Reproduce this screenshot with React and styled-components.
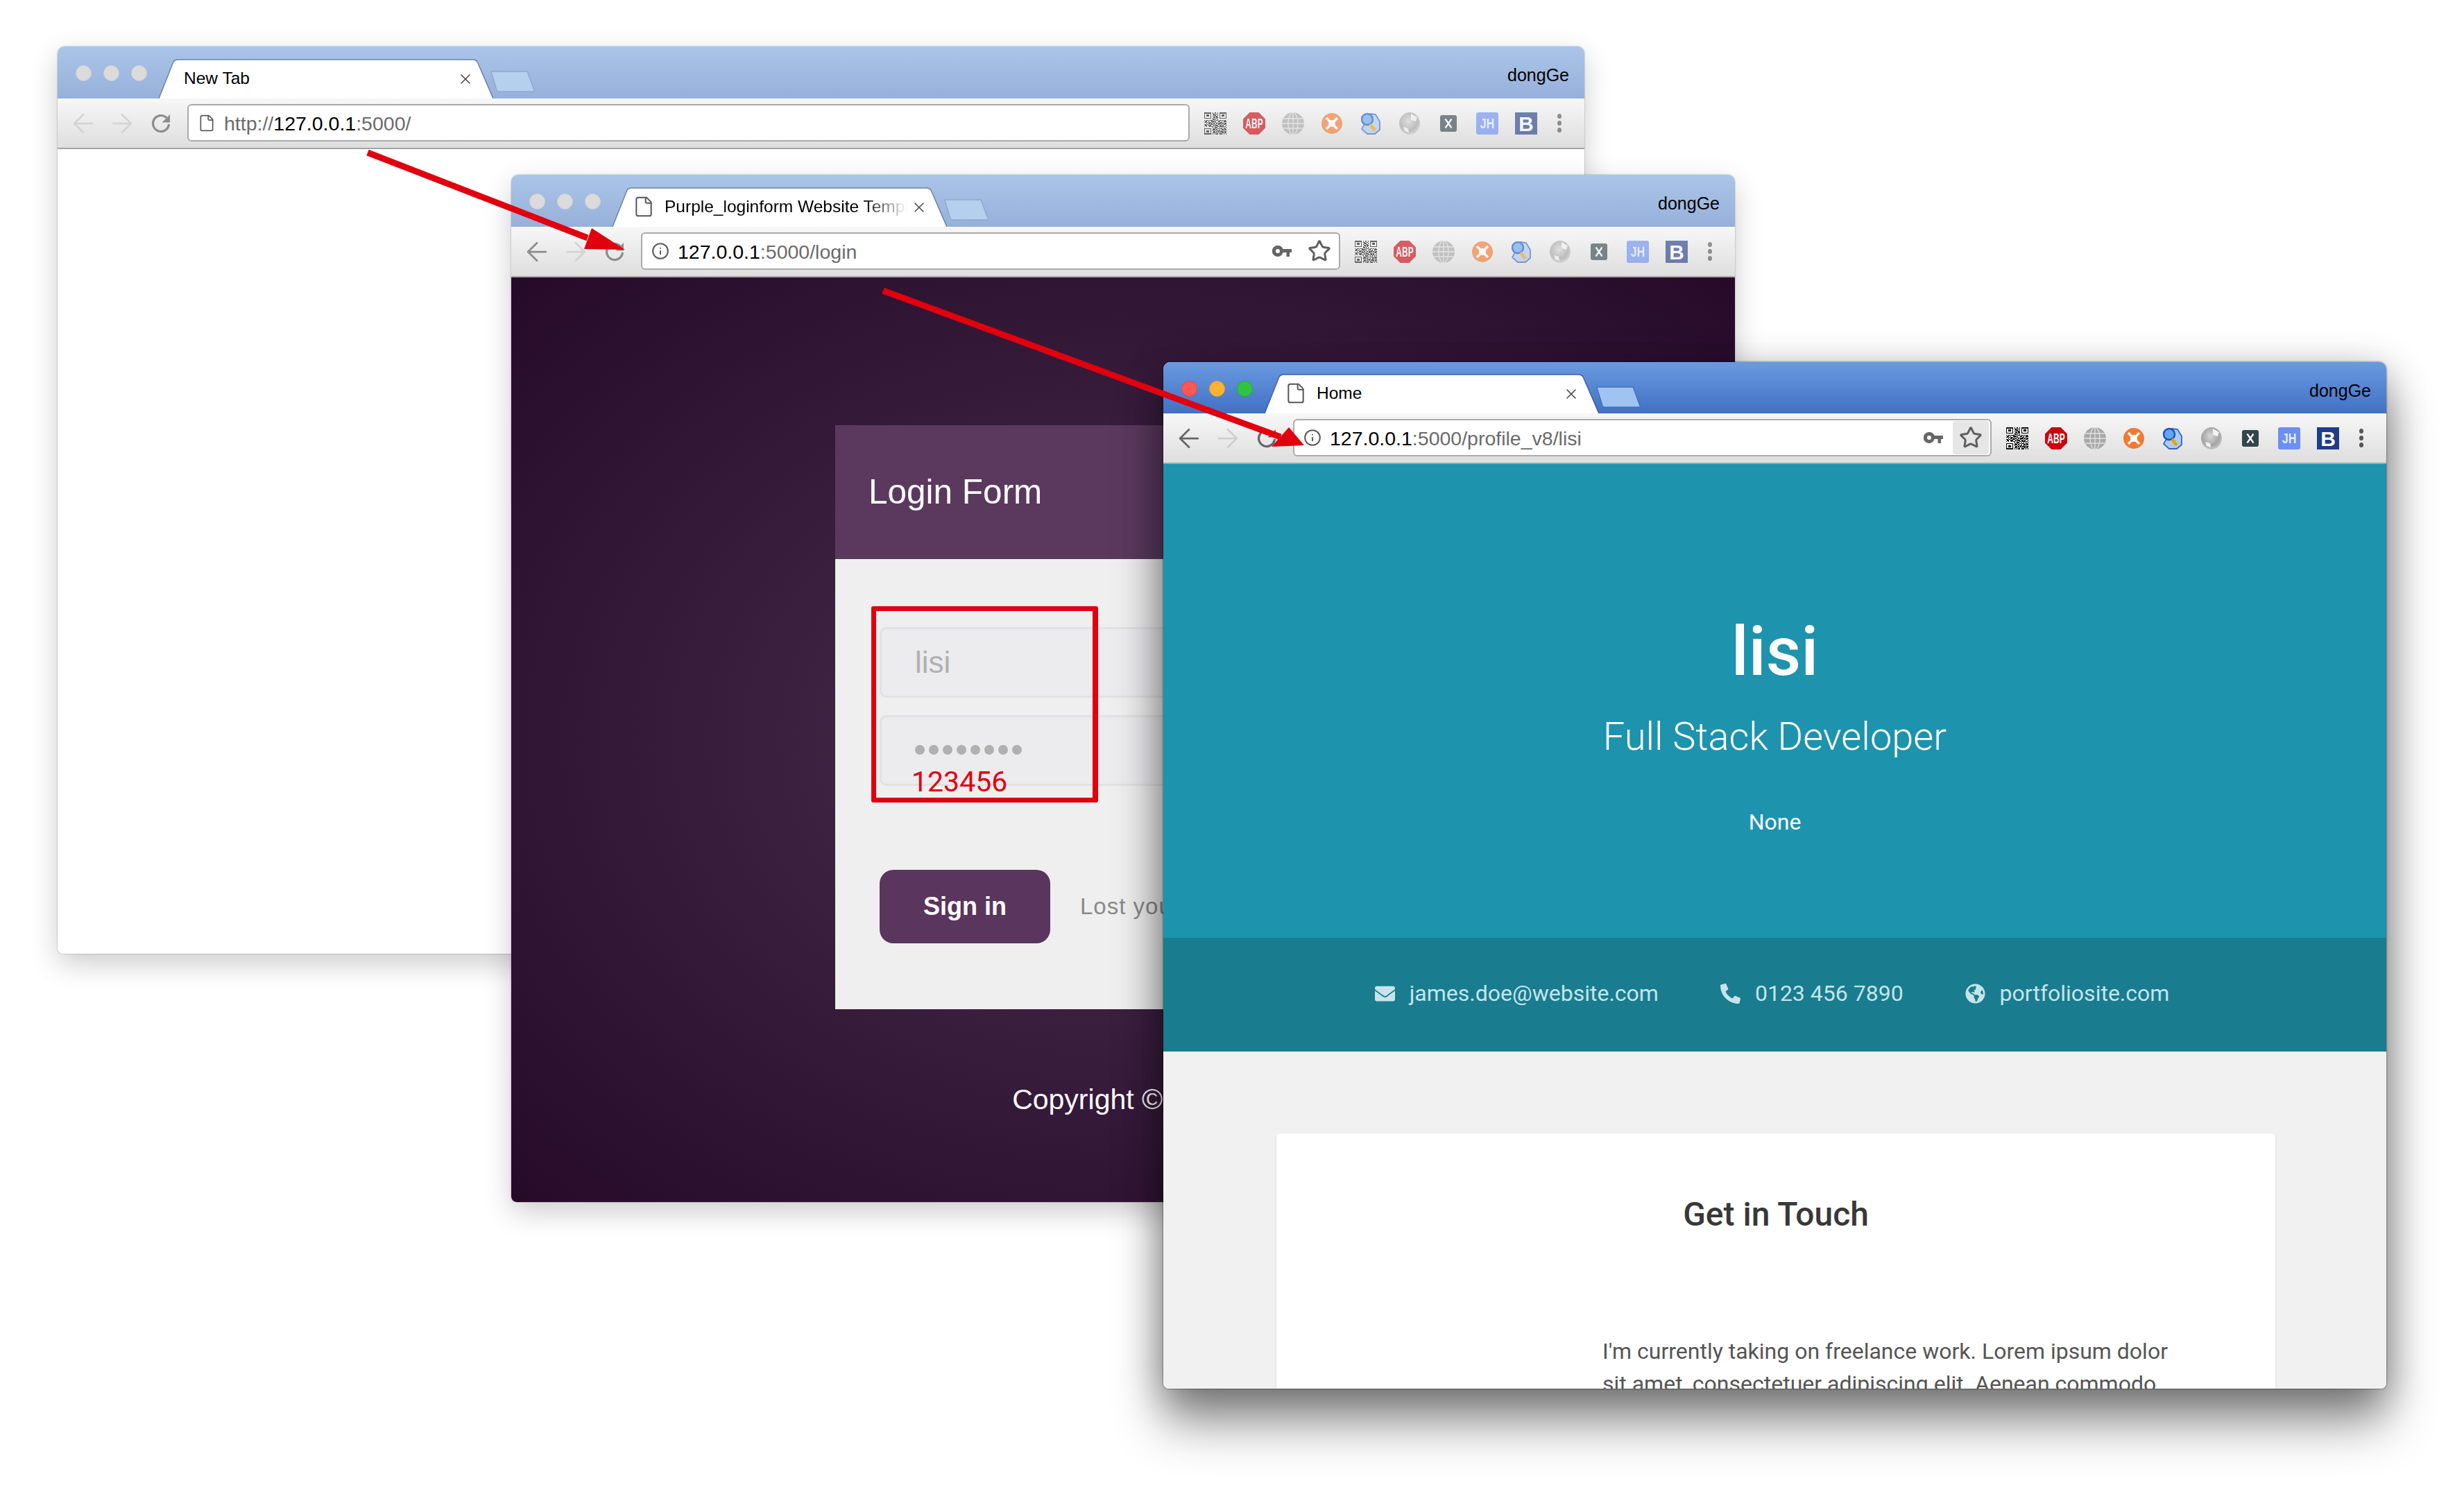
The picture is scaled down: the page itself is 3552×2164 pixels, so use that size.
import React from "react";
import styled, { createGlobalStyle } from "styled-components";
import { ArrowLeft, ArrowRight, File, Info, Star, X } from "lucide-react";
import { FaEnvelope, FaGlobeAmericas, FaPhoneAlt } from "react-icons/fa";

const GlobalStyle = createGlobalStyle`
  html, body {
    margin: 0;
    padding: 0;
    background: #fff;
    font-family: "Liberation Sans", Arial, sans-serif;
  }
  * { box-sizing: border-box; }
`;

const Stage = styled.div`
  position: relative;
  width: 3552px;
  height: 2164px;
  overflow: hidden;
  background: #fff;
`;

/* windows sit on a free desktop, so their place is given by props */
const Window = styled.section`
  position: absolute;
  left: ${(p) => p.$x}px;
  top: ${(p) => p.$y}px;
  width: ${(p) => p.$w}px;
  height: ${(p) => p.$h}px;
  display: flex;
  flex-direction: column;
  overflow: hidden;
  border-radius: 10px 10px 8px 8px;
  background: #fff;
  box-shadow: ${(p) =>
    p.$active
      ? "0 0 3px rgba(0,0,0,.6), 0 50px 70px rgba(0,0,0,.42), 0 10px 55px rgba(0,0,0,.3)"
      : "0 0 2px rgba(0,0,0,.4), 0 14px 40px rgba(0,0,0,.2)"};
`;

const TabBar = styled.div`
  flex: none;
  height: ${(p) => (p.$active ? 74 : 75)}px;
  display: flex;
  align-items: flex-start;
  padding-left: 26px;
  background: ${(p) =>
    p.$active
      ? "linear-gradient(#6a9ae0, #4270c5)"
      : "linear-gradient(#aac5e8, #97b0da)"};
`;

const Lights = styled.div`
  display: flex;
  gap: 17px;
  margin-top: 27px;
  margin-right: 17px;
`;

const Light = styled.span`
  width: 23px;
  height: 23px;
  border-radius: 50%;
  background: ${(p) => p.$color};
  border: 1px solid ${(p) => p.$edge};
`;

const Tab = styled.div`
  position: relative;
  width: 482px;
  height: 57px;
  margin-top: ${(p) => (p.$active ? 17 : 18)}px;
  display: flex;
  align-items: center;
  padding: 0 0 1px 36px;
  font-size: 24.5px;
  color: #000;
`;

const TabShape = styled.svg`
  position: absolute;
  inset: 0;
`;

const TabIcon = styled.span`
  position: relative;
  display: flex;
  width: 46px;
  margin-left: -7px;
  color: #555;
`;

const TabTitle = styled.span`
  position: relative;
  white-space: nowrap;
  overflow: hidden;
  width: ${(p) => p.$w}px;
  ${(p) =>
    p.$fade &&
    "mask-image: linear-gradient(to right, #000 82%, transparent 100%);"}
`;

const TabClose = styled.span`
  position: absolute;
  left: 430px;
  top: 17px;
  display: flex;
  color: #444;
`;

const NewTab = styled.svg`
  flex: none;
  margin-top: 35px;
  margin-left: -5px;
`;

const UserName = styled.span`
  margin-left: auto;
  margin-right: 22px;
  margin-top: 26px;
  font-size: 25px;
  line-height: 30px;
  color: #000;
`;

const Toolbar = styled.div`
  flex: none;
  height: 73px;
  display: flex;
  align-items: center;
  padding: 0 16px 0 9px;
  background: linear-gradient(#f7f7f7, #dedede);
  border-bottom: 2px solid #a4a4a4;
`;

const NavIcon = styled.span`
  flex: none;
  width: 56px;
  display: flex;
  justify-content: center;
  color: ${(p) => p.$color};
`;

const Omnibox = styled.div`
  flex: 1;
  height: 54px;
  margin: -1px 9px 0 10px;
  padding: 0 2px 0 13px;
  display: flex;
  align-items: center;
  background: #fff;
  border: 2px solid #ababab;
  border-radius: 6px;
  color: #666;
`;

const OmniIcon = styled.span`
  flex: none;
  width: 26px;
  margin-right: 12px;
  display: flex;
  justify-content: center;
  color: #5c5c5c;
`;

const Url = styled.span`
  flex: 1;
  padding-top: 2px;
  font-size: 28.5px;
  color: #6b6b6b;
  white-space: nowrap;

  b {
    font-weight: 400;
    color: #000;
  }
`;

const KeyIcon = styled.span`
  flex: none;
  display: flex;
  margin-right: 14px;
`;

const StarBox = styled.span`
  flex: none;
  width: 52px;
  height: 48px;
  display: flex;
  align-items: center;
  justify-content: center;
  border-radius: 4px;
  color: #5e5e5e;
  background: ${(p) => (p.$pressed ? "#e6e6e6" : "transparent")};
`;

const Extensions = styled.div`
  display: flex;
  align-items: center;
  opacity: ${(p) => (p.$active ? 1 : 0.62)};
`;

const ExtCell = styled.span`
  flex: none;
  width: 56px;
  height: 36px;
  display: flex;
  align-items: center;
  justify-content: center;
`;

const MoreDots = styled.span`
  flex: none;
  width: 40px;
  display: flex;
  flex-direction: column;
  align-items: center;
  gap: 3px;

  i {
    width: 6px;
    height: 7px;
    border-radius: 50%;
    background: #555;
  }
`;

const Content = styled.div`
  flex: 1;
  min-height: 0;
  background: #fff;
`;

/* login page */
const LoginPage = styled(Content)`
  display: flex;
  flex-direction: column;
  align-items: center;
  padding-top: 213px;
  background: radial-gradient(ellipse farthest-corner at 50% 50%, #4a2e50 0%, #260a28 100%);
`;

const LoginPanel = styled.div`
  position: relative;
  width: 830px;
  height: 842px;
  background: #efefef;
`;

const LoginHead = styled.h2`
  margin: 0;
  height: 193px;
  display: flex;
  align-items: center;
  padding: 0 0 2px 48px;
  font-size: 49.5px;
  font-weight: 400;
  color: #fff;
  background: #5b395f;
`;

const LoginBody = styled.div`
  display: flex;
  flex-direction: column;
  gap: 25px;
  padding: 98px 64px 0;
`;

const Input = styled.div`
  height: 102px;
  display: flex;
  align-items: center;
  padding-left: 48px;
  font-size: 44px;
  color: #b0b0b0;
  background: #ecebed;
  border: 3px solid #e2e2e2;
  border-radius: 10px;
`;

const PassDots = styled.span`
  display: flex;
  gap: 6px;
  margin-top: -2px;

  i {
    width: 14px;
    height: 14px;
    border-radius: 50%;
    background: #b0b0b0;
  }
`;

const SignRow = styled.div`
  display: flex;
  align-items: center;
  gap: 43px;
  margin-top: 96px;
`;

const SignIn = styled.span`
  width: 246px;
  height: 106px;
  display: flex;
  align-items: center;
  justify-content: center;
  font-size: 36px;
  font-weight: 700;
  color: #fff;
  background: #5a355e;
  border-radius: 20px;
`;

const LostLink = styled.span`
  font-size: 33px;
  letter-spacing: 1px;
  color: #8a8a8a;
`;

const Copyright = styled.p`
  margin: 105px 0 0;
  font-size: 41px;
  line-height: 50px;
  color: #fff;
`;

/* hand drawn note lying over the form */
const RedBox = styled.div`
  position: absolute;
  left: 52px;
  top: 261px;
  width: 327px;
  height: 283px;
  border: solid #e0000e;
  border-width: 7px 8px 7px 7px;
  border-radius: 3px;
`;

/* profile page */
const Hero = styled.header`
  flex: none;
  height: 683px;
  display: flex;
  flex-direction: column;
  align-items: center;
  padding-top: 216px;
  font-family: Roboto, sans-serif;
  color: #fff;
  background: #1d93ae;
`;

const HeroName = styled.h1`
  margin: 0;
  font-size: 98px;
  line-height: 110px;
  font-weight: 500;
`;

const HeroRole = styled.h2`
  margin: 34px 0 0;
  font-size: 56px;
  line-height: 66px;
  font-weight: 300;
`;

const HeroNote = styled.p`
  margin: 68px 0 0;
  font-size: 32px;
  line-height: 44px;
`;

const ContactBand = styled.div`
  flex: none;
  height: 164px;
  display: flex;
  align-items: center;
  justify-content: center;
  gap: 87px;
  padding: 0 10px 4px 0;
  font-family: Roboto, sans-serif;
  font-size: 32px;
  color: #c6e4ea;
  background: #197c8f;
`;

const Contact = styled.span`
  display: flex;
  align-items: center;
  gap: 19px;

  svg {
    width: 33px;
    height: 29px;
  }
`;

const Main = styled.main`
  flex: 1;
  min-height: 0;
  overflow: hidden;
  padding: 118px 160px 0 163px;
  background: #f1f1f1;
`;

const Card = styled.article`
  height: 900px;
  padding-top: 88px;
  background: #fff;
  border-radius: 4px;
  box-shadow: 0 1px 3px rgba(0, 0, 0, 0.12);
  font-family: Roboto, sans-serif;
`;

const CardTitle = styled.h3`
  margin: 0;
  text-align: center;
  font-size: 48px;
  line-height: 58px;
  font-weight: 500;
  color: #383838;
`;

const CardText = styled.p`
  width: 850px;
  margin: 145px 0 0 470px;
  font-size: 32px;
  line-height: 47px;
  color: #555;
`;

const ArrowLayer = styled.svg`
  position: absolute;
  inset: 0;
  pointer-events: none;
`;

/* toolbar drawings */
const ReloadIcon = () => (
  <svg width="32" height="32" viewBox="0 0 32 32" fill="none">
    <path
      d="M27.500 17a11.500 11.500 0 1 1-3.500-9.300"
      stroke="currentColor"
      strokeWidth="3.200"
    />
    <path d="M29 3v11.500H17.500z" fill="currentColor" />
  </svg>
);

const KeyGlyph = () => (
  <svg width="28" height="16" viewBox="0 0 28 16" fill="#666">
    <path
      fillRule="evenodd"
      d="M8 0a8 8 0 0 1 7.500 5H28v5h-3v6h-4.500v-6h-5A8 8 0 1 1 8 0zm0 5a3 3 0 1 0 0 6 3 3 0 0 0 0-6z"
    />
  </svg>
);

const QR_ROWS = [
  "1111111010110101111111",
  "1000001011001001000001",
  "1011101001110101011101",
  "1011101010011001011101",
  "1000001001101101000001",
  "1111111010101001111111",
  "0000000011010100000000",
  "1011011100101101101010",
  "0110100111010011010111",
  "1101011010110100110100",
  "0010110101001011101011",
  "1101001110110010010110",
  "0110111001011101101001",
  "1010010110100110111010",
  "0000000010111001010101",
  "1111111001010110110110",
  "1000001011101001011011",
  "1011101010010111010100",
  "1011101001101010111011",
  "1000001011010101001010",
  "1111111010101101110101",
];

const QrIcon = () => (
  <svg
    width="32"
    height="32"
    viewBox="0 0 22 21"
    preserveAspectRatio="none"
    shapeRendering="crispEdges"
  >
    {QR_ROWS.flatMap((row, y) =>
      [...row].map((c, x) =>
        c === "1" ? (
          <rect key={`${x}-${y}`} x={x} y={y} width="1" height="1" fill="#111" />
        ) : null
      )
    )}
  </svg>
);

const AbpIcon = () => (
  <svg width="32" height="32" viewBox="0 0 32 32">
    <path d="M9.500 0h13L32 9.500v13L22.500 32h-13L0 22.500v-13z" fill="#c9060f" />
    <text
      x="16"
      y="13.500"
      transform="scale(1 1.700)"
      textAnchor="middle"
      fontFamily="Liberation Sans, sans-serif"
      fontWeight="700"
      fontSize="12"
      fill="#fff"
    >
      ABP
    </text>
  </svg>
);

const GlobeIcon = () => (
  <svg width="32" height="32" viewBox="0 0 32 32" fill="none" stroke="#e0e0e0" strokeWidth="1.300">
    <circle cx="16" cy="16" r="16" fill="#a9a9a9" stroke="none" />
    <ellipse cx="16" cy="16" rx="7" ry="16" />
    <path d="M16 0v32M2 9h28M0 16h32M2 23h28" />
  </svg>
);

const OrangeIcon = () => (
  <svg width="30" height="30" viewBox="0 0 30 30">
    <circle cx="15" cy="15" r="15" fill="#f47830" />
    <path d="M7 7l6 6M23 7l-6 6M7 23l6-6M23 23l-6-6" stroke="#fff" strokeWidth="3.500" />
    <circle cx="15" cy="15" r="5" fill="#fff" />
  </svg>
);

const LensIcon = () => (
  <svg width="28" height="32" viewBox="0 0 28 32">
    <path d="M13 2l8 1 6 10v12l-7 6H9l-8-7z" fill="#a8cdf2" stroke="#3a62c0" strokeWidth="1.800" />
    <circle cx="9" cy="10" r="8" fill="#5fa8f0" stroke="#1e50c8" strokeWidth="2.500" />
    <path d="M13 17l7 9" stroke="#f0a010" strokeWidth="4.500" />
  </svg>
);

const SphereIcon = () => (
  <svg width="30" height="32" viewBox="0 0 30 32">
    <defs>
      <radialGradient id="sph" cx="45%" cy="40%" r="60%">
        <stop offset="0%" stopColor="#d8d8d8" />
        <stop offset="70%" stopColor="#a4a4a4" />
        <stop offset="100%" stopColor="#c8c8c8" />
      </radialGradient>
    </defs>
    <ellipse cx="15" cy="16" rx="15" ry="16" fill="url(#sph)" />
    <path d="M17 2l9 5-2 6-7-2zM6 21l7 2 1 6-6-2z" fill="#f2f2f2" />
  </svg>
);

const XBadge = () => (
  <svg width="24" height="24" viewBox="0 0 24 24">
    <rect width="24" height="24" rx="3" fill="#33454c" />
    <path d="M7.500 5.500l9 13M16.500 5.500l-9 13" stroke="#fff" strokeWidth="2.200" />
  </svg>
);

const JhIcon = () => (
  <svg width="32" height="32" viewBox="0 0 32 32">
    <rect width="32" height="32" rx="3" fill="#6c8ff2" />
    <text
      x="16"
      y="18"
      transform="scale(1 1.300)"
      textAnchor="middle"
      fontFamily="Liberation Sans, sans-serif"
      fontWeight="700"
      fontSize="16"
      fill="#e8eef0"
    >
      JH
    </text>
  </svg>
);

const BIcon = () => (
  <svg width="32" height="32" viewBox="0 0 32 32">
    <rect width="32" height="32" fill="#213c87" />
    <text
      x="16"
      y="27"
      textAnchor="middle"
      fontFamily="Liberation Sans, sans-serif"
      fontWeight="700"
      fontSize="30"
      fill="#fff"
    >
      B
    </text>
  </svg>
);

const EXTENSIONS = [
  QrIcon,
  AbpIcon,
  GlobeIcon,
  OrangeIcon,
  LensIcon,
  SphereIcon,
  XBadge,
  JhIcon,
  BIcon,
];

const Chrome = ({
  active,
  title,
  tabIcon,
  fade,
  nav,
  urlIcon,
  url,
  keyed,
  starred,
}) => {
  const stroke = active ? "#3c5fa8" : "#6c82a8";
  const pageFill = active ? "#9fc4f2" : "#b5cfee";
  return (
    <>
      <TabBar $active={active}>
        <Lights>
          <Light $color={active ? "#fc5753" : "#dbdbdb"} $edge={active ? "#df4744" : "#cfcfcf"} />
          <Light $color={active ? "#fdb32f" : "#dbdbdb"} $edge={active ? "#de9f34" : "#cfcfcf"} />
          <Light $color={active ? "#2fc440" : "#dbdbdb"} $edge={active ? "#27aa35" : "#cfcfcf"} />
        </Lights>
        <Tab $active={active}>
          <TabShape width="482" height="57" viewBox="0 0 482 57">
            <path d="M0 57 L21 4 Q23 1 27 1 L453 1 Q457 1 459 4 L482 57 Z" fill="#fff" />
            <path
              d="M0 57 L21 4 Q23 1 27 1 L453 1 Q457 1 459 4 L482 57"
              fill="none"
              stroke={stroke}
              strokeWidth="1.500"
            />
          </TabShape>
          {tabIcon && (
            <TabIcon>
              <File size={32} strokeWidth={1.5} />
            </TabIcon>
          )}
          <TabTitle $fade={fade} $w={fade ? 350 : 380}>
            {title}
          </TabTitle>
          <TabClose>
            <X size={24} strokeWidth={1.5} />
          </TabClose>
        </Tab>
        <NewTab width="65" height="31" viewBox="0 0 65 31">
          <path
            d="M2 2 Q1 1 3 1 L53 1 Q55 1 55 3 L64 28 Q65 30 62 30 L13 30 Q11 30 10 28 Z"
            fill={pageFill}
            stroke={active ? "#4a6fb4" : "#8ea8cc"}
            strokeWidth="1.500"
          />
        </NewTab>
        <UserName>dongGe</UserName>
      </TabBar>
      <Toolbar>
        <NavIcon $color={nav[0]}>
          <ArrowLeft size={44} strokeWidth={1.5} />
        </NavIcon>
        <NavIcon $color={nav[1]}>
          <ArrowRight size={44} strokeWidth={1.5} />
        </NavIcon>
        <NavIcon $color={nav[2]}>
          <ReloadIcon />
        </NavIcon>
        <Omnibox>
          <OmniIcon>
            {urlIcon === "info" ? (
              <Info size={32} strokeWidth={1.9} />
            ) : (
              <File size={27} strokeWidth={1.6} />
            )}
          </OmniIcon>
          <Url>{url}</Url>
          {keyed && (
            <KeyIcon>
              <KeyGlyph />
            </KeyIcon>
          )}
          {keyed && (
            <StarBox $pressed={starred}>
              <Star size={34} strokeWidth={2.1} />
            </StarBox>
          )}
        </Omnibox>
        <Extensions $active={active}>
          {EXTENSIONS.map((Icon, i) => (
            <ExtCell key={i}>
              <Icon />
            </ExtCell>
          ))}
          <MoreDots>
            <i />
            <i />
            <i />
          </MoreDots>
        </Extensions>
      </Toolbar>
    </>
  );
};

const PASSWORD_DOTS = Array.from({ length: 8 });

export default function App() {
  return (
    <Stage>
      <GlobalStyle />

      <Window $x={83} $y={67} $w={2201} $h={1308}>
        <Chrome
          title="New Tab"
          nav={["#d4d4d4", "#d4d4d4", "#8c8c8c"]}
          url={
            <>
              http://<b>127.0.0.1</b>:5000/
            </>
          }
        />
        <Content />
      </Window>

      <Window $x={737} $y={252} $w={1764} $h={1481}>
        <Chrome
          title="Purple_loginform Website Template"
          tabIcon
          fade
          nav={["#8c8c8c", "#d4d4d4", "#8c8c8c"]}
          urlIcon="info"
          url={
            <>
              <b>127.0.0.1</b>:5000/login
            </>
          }
          keyed
        />
        <LoginPage>
          <LoginPanel>
            <LoginHead>Login Form</LoginHead>
            <LoginBody>
              <Input>lisi</Input>
              <Input>
                <PassDots>
                  {PASSWORD_DOTS.map((_, i) => (
                    <i key={i} />
                  ))}
                </PassDots>
              </Input>
              <SignRow>
                <SignIn>Sign in</SignIn>
                <LostLink>Lost your password?</LostLink>
              </SignRow>
            </LoginBody>
            <RedBox />
          </LoginPanel>
          <Copyright>Copyright © 2017</Copyright>
        </LoginPage>
      </Window>

      <Window $active $x={1677} $y={522} $w={1763} $h={1480}>
        <Chrome
          active
          title="Home"
          tabIcon
          nav={["#666", "#cfcfcf", "#666"]}
          urlIcon="info"
          url={
            <>
              <b>127.0.0.1</b>:5000/profile_v8/lisi
            </>
          }
          keyed
          starred
        />
        <Hero>
          <HeroName>lisi</HeroName>
          <HeroRole>Full Stack Developer</HeroRole>
          <HeroNote>None</HeroNote>
        </Hero>
        <ContactBand>
          <Contact>
            <FaEnvelope />
            james.doe@website.com
          </Contact>
          <Contact>
            <FaPhoneAlt />
            0123 456 7890
          </Contact>
          <Contact>
            <FaGlobeAmericas />
            portfoliosite.com
          </Contact>
        </ContactBand>
        <Main>
          <Card>
            <CardTitle>Get in Touch</CardTitle>
            <CardText>
              I'm currently taking on freelance work. Lorem ipsum dolor sit
              amet, consectetuer adipiscing elit. Aenean commodo ligula eget
              dolor.
            </CardText>
          </Card>
        </Main>
      </Window>

      <ArrowLayer width="3552" height="2164" viewBox="0 0 3552 2164">
        <g fill="#e0000e">
          <path d="M530 220 L847 343" stroke="#e0000e" strokeWidth="9" />
          <polygon points="901,360 853,329 842,359" />
          <path d="M1273 419 L1846 630" stroke="#e0000e" strokeWidth="9" />
          <polygon points="1880,642 1858,616 1833,644" />
        </g>
        <text x="1314" y="1141" fontFamily="Roboto, sans-serif" fontSize="41" fill="#e0000e">
          123456
        </text>
      </ArrowLayer>
    </Stage>
  );
}
